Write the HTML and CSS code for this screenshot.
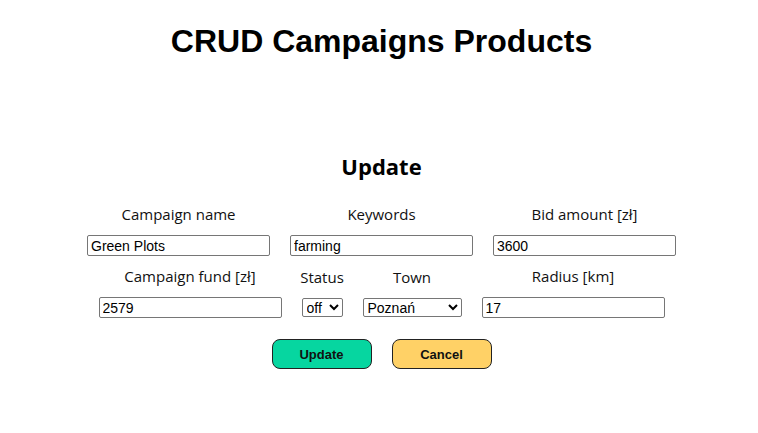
FILE: index.html
```html
<!DOCTYPE html>
<html lang="pl">
<head>
<meta charset="utf-8">
<title>CRUD Campaigns Products</title>
<link rel="stylesheet" href="styles.css">
</head>
<body>
<h1 class="title">CRUD Campaigns Products</h1>
<form class="form">
  <h2 class="form-title">Update</h2>
  <div class="row">
    <div class="field">
      <label class="label" for="name">Campaign name</label>
      <input class="input" id="name" type="text" value="Green Plots">
    </div>
    <div class="field">
      <label class="label" for="keywords">Keywords</label>
      <input class="input" id="keywords" type="text" value="farming">
    </div>
    <div class="field">
      <label class="label" for="bid">Bid amount [zł]</label>
      <input class="input" id="bid" type="text" value="3600">
    </div>
  </div>
  <div class="row">
    <div class="field">
      <label class="label" for="fund">Campaign fund [zł]</label>
      <input class="input" id="fund" type="text" value="2579">
    </div>
    <div class="field field-status">
      <label class="label" for="status">Status</label>
      <select class="select select-status" id="status">
        <option>off</option>
        <option>on</option>
      </select>
    </div>
    <div class="field field-town">
      <label class="label" for="town">Town</label>
      <select class="select select-town" id="town">
        <option>Poznań</option>
        <option>Warszawa</option>
        <option>Kraków</option>
      </select>
    </div>
    <div class="field">
      <label class="label" for="radius">Radius [km]</label>
      <input class="input" id="radius" type="text" value="17">
    </div>
  </div>
  <div class="actions">
    <button class="btn btn-update" type="button">Update</button>
    <button class="btn btn-cancel" type="button">Cancel</button>
  </div>
</form>
</body>
</html>
```
FILE: styles.css
```css
html, body {
  background: #ffffff;
}
body {
  margin: 0 0 0 5px;
  color: #000;
  font-family: "Open Sans", "Noto Sans", sans-serif;
}
.title {
  margin: 23px 0 0;
  font-family: "Liberation Sans", Arial, sans-serif;
  font-size: 32px;
  line-height: 37px;
  font-weight: bold;
  text-align: center;
}
.form {
  margin: 91px 0 0;
  display: flex;
  flex-direction: column;
  align-items: center;
}
.form-title {
  margin: 0 0 23px;
  font-size: 22px;
  line-height: 30px;
  font-weight: bold;
}
.row {
  display: flex;
  justify-content: center;
  align-items: flex-end;
  gap: 20px;
  margin-bottom: 10px;
}
.field {
  display: flex;
  flex-direction: column;
  align-items: center;
  gap: 11px;
  width: 183px;
}
.field-status {
  width: 41px;
}
.field-town {
  width: 99px;
}
.label {
  font-size: 15px;
  line-height: 20px;
  color: #111;
  white-space: nowrap;
}
.input {
  box-sizing: border-box;
  width: 183px;
  height: 21px;
  margin: 0;
  padding: 1px 3px;
  border: 1px solid #767676;
  border-radius: 2px;
  font-family: "Liberation Sans", Arial, sans-serif;
  font-size: 14px;
  color: #000;
  background: #fff;
}
.select {
  box-sizing: border-box;
  height: 19px;
  margin: 0 0 1px;
  border: 1px solid #767676;
  border-radius: 2px;
  font-family: "Liberation Sans", Arial, sans-serif;
  font-size: 14px;
  color: #000;
  background: #fff;
}
.select-status {
  width: 41px;
}
.select-town {
  width: 99px;
}
.actions {
  display: flex;
  justify-content: center;
  gap: 20px;
  margin-top: 11px;
}
.btn {
  box-sizing: border-box;
  width: 100px;
  height: 30px;
  border: 1px solid #222;
  border-radius: 8px;
  font-family: "Liberation Sans", Arial, sans-serif;
  font-size: 13px;
  font-weight: bold;
  color: #111;
  cursor: pointer;
}
.btn-update {
  background: #06d6a0;
}
.btn-cancel {
  background: #ffd166;
}
```
